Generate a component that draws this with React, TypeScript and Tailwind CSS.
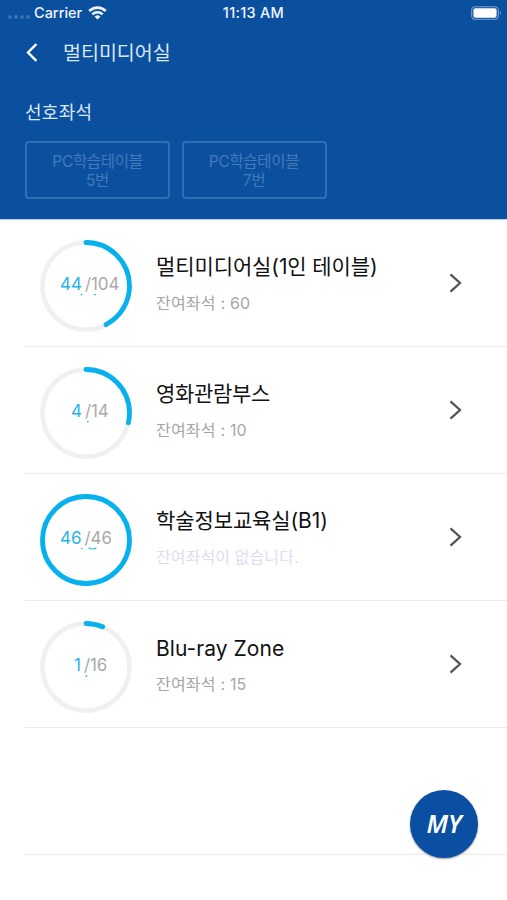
import type { ReactNode } from "react";

type Room = {
  name: string;
  used: number;
  total: number;
  nameClass: string;
  countClass: string;
  specks: ReactNode;
};

const CIRCUMFERENCE = 2 * Math.PI * 43.5;

const rooms: Room[] = [
  {
    name: "멀티미디어실(1인 테이블)",
    used: 44,
    total: 104,
    nameClass: "leading-[30px] pb-[2px] tracking-[-0.1px]",
    countClass: "left-[20px]",
    specks: <path d="M40.6 54.7h1.8M54.2 54.7h1.8" />,
  },
  {
    name: "영화관람부스",
    used: 4,
    total: 14,
    nameClass: "leading-[30px] pb-[2px] tracking-[-0.3px]",
    countClass: "left-[31px]",
    specks: <path d="M47 54.7h1.8" />,
  },
  {
    name: "학술정보교육실(B1)",
    used: 46,
    total: 46,
    nameClass: "leading-[30px] pb-[2px] tracking-[-0.1px]",
    countClass: "left-[20px]",
    specks: <path d="M40.8 54.5h1.8M48.5 53.8q4 2.4 8 0" />,
  },
  {
    name: "Blu-ray Zone",
    used: 1,
    total: 16,
    nameClass: "leading-[32px] tracking-[0.05px]",
    countClass: "left-[34px]",
    specks: <path d="M45.6 55h1.6" strokeWidth="1.8" />,
  },
];

const StatusBar = () => (
  <div className="h-[26px] grid grid-cols-3 items-center text-[14.5px] font-medium leading-none text-[#eef4ff]">
    <div className="flex items-center pl-[8px]">
      <span className="flex gap-[2px] pt-[8px]">
        {[0, 1, 2, 3].map((dot) => (
          <i key={dot} className="size-[4px] rounded-full bg-[#3a70b3]" />
        ))}
      </span>
      <span className="ml-[4px]">Carrier</span>
      <svg className="ml-[6px] w-[19px] h-[14px]" viewBox="0 0 19 14" fill="none" stroke="currentColor">
        <path d="M1.2 5a11.8 11.8 0 0 1 16.6 0" strokeWidth="2.6" />
        <path d="M4.3 8.4a7.4 7.4 0 0 1 10.4 0" strokeWidth="2.5" />
        <path d="M9.5 13.6 6.6 10.7a4.2 4.2 0 0 1 5.8 0z" fill="currentColor" stroke="none" />
      </svg>
    </div>
    <div className="text-center whitespace-nowrap tracking-[0.3px]">11:13 AM</div>
    <svg className="justify-self-end mr-[5px] w-[31px] h-[14px]" viewBox="0 0 31 14">
      <rect x="0.7" y="0.7" width="26.6" height="12.6" rx="3.6" fill="none" stroke="#7ba0d0" strokeWidth="1.1" />
      <rect x="2.4" y="2.3" width="23.2" height="9.4" rx="2" fill="#fff" />
      <path d="M28.9 4.8q2 2.2 0 4.4z" fill="#7ba0d0" />
    </svg>
  </div>
);

const SeatButton = ({ number }: { number: string }) => (
  <button className="w-[145px] h-[58px] rounded-[4px] border-2 border-[#336eb2] pt-[2px] text-[15.5px] leading-[19px] tracking-[-0.3px] text-[#437aba]">
    PC학습테이블
    <br />
    {number}번
  </button>
);

const SeatRing = ({ room }: { room: Room }) => (
  <div className="relative size-[92px] shrink-0">
    <svg className="size-full" viewBox="0 0 92 92" fill="none">
      <circle cx="46" cy="46" r="43.5" stroke="#f0f0f1" strokeWidth="4.6" />
      <circle
        cx="46"
        cy="46"
        r="43.5"
        stroke="#07b1ed"
        strokeWidth="4.8"
        strokeLinecap="round"
        strokeDasharray={`${(room.used / room.total) * CIRCUMFERENCE} ${CIRCUMFERENCE}`}
        transform="rotate(-90 46 46)"
      />
      <g stroke="#2bb8ef" strokeWidth="1.2">{room.specks}</g>
    </svg>
    <div className={`absolute top-[33px] flex items-baseline text-[17px] leading-[22px] ${room.countClass}`}>
      <span className="text-[#26b3ec]">{room.used}</span>
      <span className="ml-[3px] text-[#a9a9a9] tracking-[-0.1px]">/{room.total}</span>
    </div>
  </div>
);

const RoomRow = ({ room }: { room: Room }) => {
  const left = room.total - room.used;

  return (
    <li className="ml-[25px] h-[127px] flex items-start border-b border-[#ebebec] pl-[15px] pt-[20px]">
      <SeatRing room={room} />
      <div className="ml-[24px] pt-[12px] flex-1 whitespace-nowrap">
        <h2 className={`text-[21px] text-[#111] ${room.nameClass}`}>{room.name}</h2>
        {left > 0 ? (
          <p className="mt-[7px] text-[16px] leading-[24px] tracking-[0.2px] text-[#a6a6a6]">잔여좌석 : {left}</p>
        ) : (
          <p className="mt-[7px] text-[16px] leading-[24px] tracking-[0.1px] text-[#dedcf3]">잔여좌석이 없습니다.</p>
        )}
      </div>
      <svg className="mt-[33px] mr-[45px] w-[13px] h-[20px]" viewBox="0 0 13 20" fill="none" stroke="#545457" strokeWidth="2.3">
        <path d="M1.5 1.3 11 10 1.5 18.7" />
      </svg>
    </li>
  );
};

const App = () => {
  return (
    <div className="relative w-[507px] h-[900px] overflow-hidden bg-white font-['Inter','Noto_Sans_CJK_KR',sans-serif]">
      <header className="h-[219px] bg-[#0b509f]">
        <StatusBar />

        <div className="h-[53px] flex items-center pl-[26px]">
          <svg className="w-[12px] h-[19px]" viewBox="0 0 12 19" fill="none" stroke="#fff" strokeWidth="2.4">
            <path d="M10.4 1.2 2 9.5l8.4 8.3" />
          </svg>
          <h1 className="ml-[25px] text-[19.5px] leading-[28px] text-[#dbe9fa]">멀티미디어실</h1>
        </div>

        <h3 className="mt-[21px] ml-[25px] text-[18px] leading-[26px] tracking-[0.3px] text-[#dbe9fa]">선호좌석</h3>
        <div className="mt-[15px] ml-[25px] flex gap-[11.5px]">
          <SeatButton number="5" />
          <SeatButton number="7" />
        </div>
      </header>

      <ul className="border-t border-[#b9cfe8]">
        {rooms.map((room) => (
          <RoomRow key={room.name} room={room} />
        ))}
        <li className="ml-[25px] h-[127px] border-b border-[#ebebec]" />
      </ul>

      <button className="absolute left-[410px] top-[790px] size-[68px] rounded-full bg-[#0b4fa2] shadow-[0_1px_2px_rgba(0,0,0,0.4)] font-['Noto_Sans',sans-serif] text-[25px] font-semibold italic text-white">
        MY
      </button>
    </div>
  );
};

export default App;
